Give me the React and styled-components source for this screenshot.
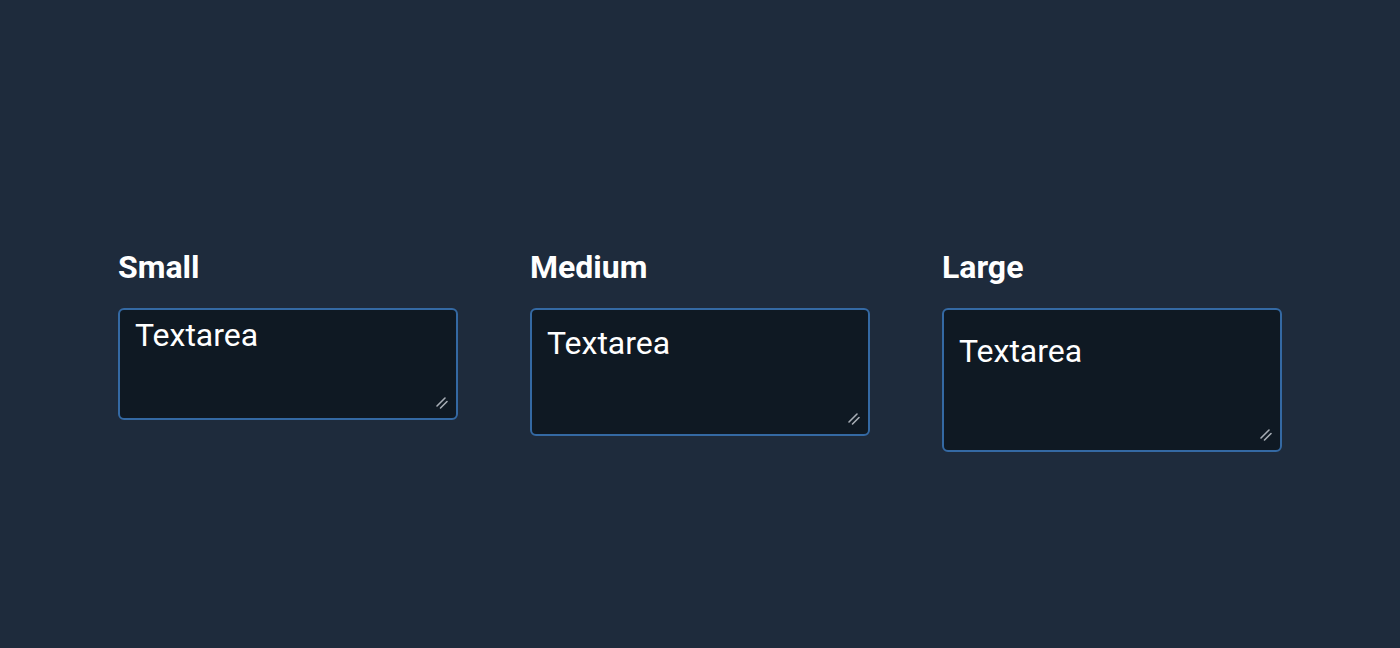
import React from 'react';
import styled, { createGlobalStyle } from 'styled-components';

const GlobalStyle = createGlobalStyle`
  html, body {
    margin: 0;
    padding: 0;
    background: #1e2b3c;
  }
  body {
    font-family: 'Roboto', 'Liberation Sans', sans-serif;
  }
`;

const Page = styled.div`
  width: 1400px;
  height: 648px;
  box-sizing: border-box;
  padding-top: 248px;
  display: flex;
  justify-content: center;
  align-items: flex-start;
  gap: 72px;
  background: #1e2b3c;
`;

const Column = styled.div`
  width: 340px;
  display: flex;
  flex-direction: column;
`;

const Label = styled.label`
  font-family: 'Roboto', sans-serif;
  font-weight: 700;
  font-size: 32px;
  line-height: 38px;
  color: #ffffff;
  margin-bottom: 22px;
`;

const sizes = {
  sm: { pad: 8, height: 112 },
  md: { pad: 16, height: 128 },
  lg: { pad: 24, height: 144 },
};

const FieldWrap = styled.div`
  position: relative;
  width: 340px;
`;

const Field = styled.textarea`
  display: block;
  box-sizing: border-box;
  width: 340px;
  height: ${p => sizes[p.$size].height}px;
  padding: ${p => sizes[p.$size].pad}px 15px;
  margin: 0;
  border: 2px solid #3469a3;
  border-radius: 6px;
  background: #0f1923;
  color: #ffffff;
  font-family: 'Roboto', sans-serif;
  font-size: 32px;
  line-height: 34px;
  resize: none;
  outline: none;
`;

const Grip = styled.svg`
  position: absolute;
  right: 9px;
  bottom: 10px;
  width: 14px;
  height: 14px;
  pointer-events: none;
`;

const items = [
  { label: 'Small', size: 'sm' },
  { label: 'Medium', size: 'md' },
  { label: 'Large', size: 'lg' },
];

export default function App() {
  return (
    <>
      <GlobalStyle />
      <Page>
        {items.map(item => (
          <Column key={item.size}>
            <Label>{item.label}</Label>
            <FieldWrap>
              <Field $size={item.size} defaultValue="Textarea" />
              <Grip viewBox="0 0 14 14">
                <path
                  d="M2 10 L10 2 M5.5 12 L12 5.5"
                  stroke="#a7adb5"
                  strokeWidth="1.6"
                  strokeLinecap="round"
                  fill="none"
                />
              </Grip>
            </FieldWrap>
          </Column>
        ))}
      </Page>
    </>
  );
}
